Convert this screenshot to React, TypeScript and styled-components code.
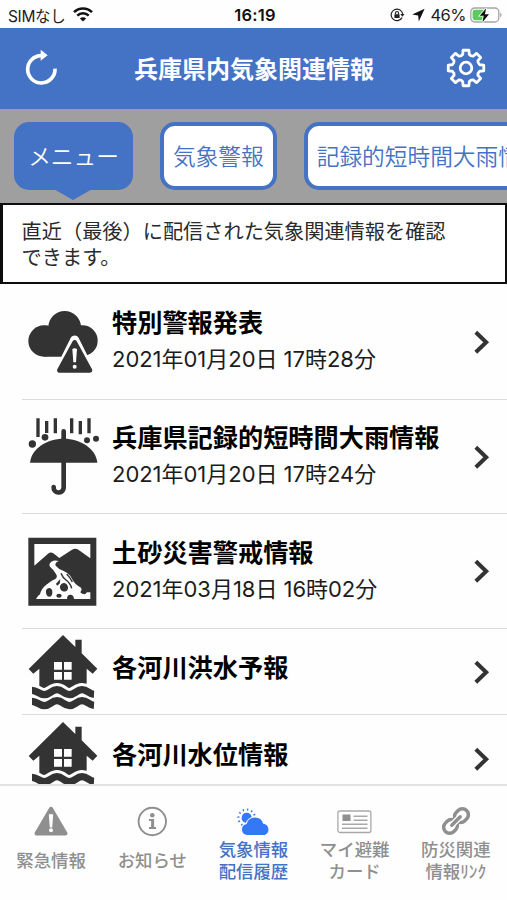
import React from "react";
import styled, { createGlobalStyle, css } from "styled-components";

const BLUE = "#4472c4";
const INK = "#333333";
const GRAY = "#8f8f8f";
const ACTIVE = "#3478f6";

const Global = createGlobalStyle`
  * { box-sizing: border-box; }
  html, body { margin: 0; padding: 0; background: #fefefe; overflow: hidden; }
  body { font-family: "Noto Sans CJK JP", "Noto Sans", sans-serif; color: #000; }
`;

const Screen = styled.div`
  width: 507px;
  height: 900px;
  display: flex;
  flex-direction: column;
  overflow: hidden;
  background: #fefefe;
`;

const StatusBar = styled.div`
  height: 28px;
  flex: none;
  display: grid;
  grid-template-columns: 1fr 60px 1fr;
  align-items: center;
  padding: 1px 5px 0 8px;
  font-family: "Inter", "Noto Sans CJK JP", sans-serif;
  font-size: 15.5px;
  color: #222;
`;

const StatusGroup = styled.div<{ $end?: boolean }>`
  display: flex;
  align-items: center;
  justify-content: ${(p) => (p.$end ? "flex-end" : "flex-start")};
  white-space: nowrap;
`;

const Carrier = styled.span`
  letter-spacing: -0.35px;
  margin-right: 8px;
`;

const Clock = styled.span`
  font-weight: 600;
  font-size: 16.5px;
  text-align: center;
  letter-spacing: 0.2px;
  color: #111;
`;

const Percent = styled.span`
  font-size: 16.5px;
  letter-spacing: -0.5px;
  margin: 0 4px 0 5px;
`;

const Header = styled.header`
  height: 81px;
  flex: none;
  display: flex;
  align-items: center;
  justify-content: space-between;
  padding: 0 21px 1px 22px;
  background: ${BLUE};
  color: #fff;
`;

const Title = styled.h1`
  margin: 0;
  padding-left: 2px;
  font-size: 24px;
  font-weight: 700;
  line-height: 36px;
`;

const MenuStrip = styled.div`
  height: 94px;
  flex: none;
  display: flex;
  align-items: flex-start;
  gap: 27px;
  padding: 13px 0 0 14px;
  background: #9f9f9f;
  overflow: hidden;
`;

const Pill = styled.button<{ $active?: boolean }>`
  position: relative;
  flex: none;
  height: 68px;
  padding: 0 9px 1px;
  border: 4px solid ${BLUE};
  border-radius: 15px;
  background: ${(p) => (p.$active ? BLUE : "#fff")};
  color: ${(p) => (p.$active ? "#fff" : BLUE)};
  font-family: inherit;
  font-size: 22.7px;
  font-weight: 350;
  white-space: nowrap;
  ${(p) =>
    p.$active &&
    css`
      width: 119px;
      &::after {
        content: "";
        position: absolute;
        left: 50%;
        top: 62px;
        margin-left: -22px;
        border: 21px solid transparent;
        border-top: 12px solid ${BLUE};
        border-bottom: 0;
      }
    `}
`;

const Notice = styled.p`
  flex: none;
  height: 81px;
  margin: 0;
  padding: 13px 18px 0 18.6px;
  border: solid #0d0d0d;
  border-width: 2px 2px 2px 3px;
  background: #fff;
  color: #2a2a2a;
  font-size: 20.2px;
  line-height: 26px;
`;

const List = styled.ul`
  flex: 1;
  min-height: 0;
  margin: 0;
  padding: 0;
  list-style: none;
  overflow: hidden;
`;

const Row = styled.li<{ $height: number }>`
  height: ${(p) => p.$height}px;
  margin-left: 22px;
  padding: 0 17px 0 3px;
  display: flex;
  align-items: center;
  border-bottom: 1px solid #dcdcdc;
`;

const RowText = styled.div<{ $single?: boolean }>`
  flex: 1;
  padding-left: 11px;
  margin-bottom: ${(p) => (p.$single ? 10 : 2)}px;
  white-space: nowrap;
`;

const RowTitle = styled.div`
  font-size: 25.2px;
  font-weight: 700;
  line-height: 37px;
`;

const RowDate = styled.div`
  font-family: "Inter", "Noto Sans CJK JP", sans-serif;
  font-size: 22px;
  font-weight: 400;
  line-height: 38px;
  letter-spacing: -0.03px;
  color: #1c1c1c;
`;

const TabBar = styled.nav`
  flex: none;
  height: 116px;
  display: grid;
  grid-template-columns: repeat(5, 101.2px);
  border-top: 2px solid #e2e2e2;
  background: #fefefe;
`;

const Tab = styled.div<{ $active?: boolean }>`
  display: flex;
  flex-direction: column;
  align-items: center;
  padding-top: 19px;
  color: ${(p) => (p.$active ? BLUE : GRAY)};
  font-size: 17.4px;
  font-weight: 500;
  line-height: 22px;
  text-align: center;
  white-space: nowrap;
`;

const TabLabel = styled.div`
  height: 45px;
  padding-left: 1px;
  display: flex;
  flex-direction: column;
  justify-content: center;
`;

const Wifi = () => (
  <svg width="20" height="15" viewBox="0 0 20 15" fill="none" stroke="#111" strokeWidth="2.5">
    <path d="M1 5.2a12.8 12.8 0 0 1 18 0" />
    <path d="M4.3 8.7a8 8 0 0 1 11.4 0" />
    <path d="M10 14.6l-3.1-3.1a4.4 4.4 0 0 1 6.2 0z" fill="#111" stroke="none" />
  </svg>
);

const RotationLock = () => (
  <svg width="15" height="14" viewBox="0 0 15 14" fill="none" stroke="#222" strokeWidth="1.2">
    <path d="M12.1 9.6a5.8 5.8 0 1 1 .6-3.6" />
    <path d="M10.3 6h4.2l-2.1 2.8z" fill="#222" stroke="none" />
    <rect x="4.4" y="6.2" width="5.2" height="3.9" rx=".6" fill="#222" stroke="none" />
    <path d="M5.5 6.4V5a1.5 1.5 0 0 1 3 0v1.4" />
  </svg>
);

const LocationArrow = () => (
  <svg width="20" height="14" viewBox="-7 0 20 14">
    <path d="M12.6 .8L.2 6.6l6 .9.6 5.9z" fill="#111" />
  </svg>
);

const Battery = () => (
  <svg width="32" height="16" viewBox="0 0 32 16">
    <rect x=".8" y="1" width="28" height="14" rx="4" fill="none" stroke="#a5a5a5" strokeWidth="1.3" />
    <path d="M30.2 5.6c1.8.8 1.8 4 0 4.8z" fill="#a5a5a5" />
    <path d="M5 2.8h9v10.4H5a2.4 2.4 0 0 1-2.4-2.4V5.2A2.4 2.4 0 0 1 5 2.8z" fill="#5ccb5f" />
    <path d="M16.2 1.2L9.7 8.8h4l-1.2 6.4L19 7.3h-4.1z" fill="#111" stroke="#fff" strokeWidth="1.6" paintOrder="stroke" />
  </svg>
);

const Reload = () => (
  <svg width="38" height="40" viewBox="0 0 114 120">
    <path d="M99 62A41 41 0 1 1 58 23" fill="none" stroke="#fff" strokeWidth="11" />
    <path d="M56 5l21 17-21 16z" fill="#fff" />
  </svg>
);

const gearPath = (() => {
  const pts: string[] = [];
  const at = (r: number, deg: number) => {
    const a = ((deg - 90) * Math.PI) / 180;
    return `${(20 + r * Math.cos(a)).toFixed(2)} ${(20 + r * Math.sin(a)).toFixed(2)}`;
  };
  for (let i = 0; i < 8; i++) {
    const c = i * 45;
    pts.push(`${i ? "L" : "M"}${at(14, c - 13.5)}`);
    pts.push(`L${at(18, c - 9.5)}`, `L${at(18, c + 9.5)}`, `L${at(14, c + 13.5)}`);
    pts.push(`Q${at(12.6, c + 22.5)} ${at(14, c + 31.5)}`);
  }
  return pts.join("") + "Z";
})();

const Gear = () => (
  <svg width="40" height="40" viewBox="0 0 40 40" fill="none" stroke="#fff" strokeWidth="2.8" strokeLinejoin="round">
    <path d={gearPath} />
    <circle cx="20" cy="20" r="5.8" />
  </svg>
);

const CloudAlert = () => (
  <svg width="76" height="80" viewBox="75 51 228 240">
    <g fill={INK}>
      <circle cx="194" cy="127" r="49" />
      <circle cx="132" cy="168" r="47" />
      <circle cx="247" cy="167" r="46" />
      <path d="M132 122h115v93H132z" />
      <path d="M224 165l-46 92h92z" stroke="#fefefe" strokeWidth="27" strokeLinejoin="round" />
    </g>
    <path d="M150 266h154v26H150z" fill="#fefefe" />
    <path d="M224 172l-46 84h92z" fill={INK} stroke={INK} strokeWidth="14" strokeLinejoin="round" />
    <path d="M217 192q7-4 14 0l-3 40h-8z" fill="#fefefe" />
    <circle cx="224" cy="245" r="6" fill="#fefefe" />
  </svg>
);

const Umbrella = () => (
  <svg width="76" height="80" viewBox="75 50 228 240" fill={INK}>
    <path d="M90 187c4-42 50-72 101-72s97 30 101 72z" />
    <path d="M191 93v170a15 15 0 0 1-30-3" fill="none" stroke={INK} strokeWidth="14" strokeLinecap="round" />
    <path d="M114 54v56M140 62v36M166 54v45M215 54v45M241 62v40M267 54v45" stroke={INK} strokeWidth="10" />
    <circle cx="97" cy="131" r="11" />
    <circle cx="135" cy="111" r="10" />
    <circle cx="261" cy="120" r="9" />
    <circle cx="288" cy="115" r="9" />
  </svg>
);

const Landslide = () => (
  <svg width="76" height="80" viewBox="75 48 228 240">
    <path d="M85 68h204v204H85z" fill={INK} />
    <g fill="#fefefe">
      <path d="M103 87h168v43l-36-26q-9-6-19 0l-38 25-18-14q-8-5-16 1l-41 36z" />
      <path d="M176 138q-13 6-9 14 8 10 24 16 18 8 24 22 8 18 28 28l2 6-4 8q4 6 14 6l6-6h10v20H108q3-8 12-14 4-18 19-29 12-11 27-17 8-6 2-15-8-14-18-22-5-8 4-15 10-6 22-2z" />
    </g>
    <g fill={INK}>
      <path d="M148 219q10 2 9 14t-9 12-10-12 10-14z" />
      <ellipse cx="192" cy="217" rx="12" ry="13" transform="rotate(-25 192 217)" />
      <ellipse cx="177" cy="242" rx="8" ry="6" />
      <path d="M201 252q0-13 10-13t11 13z" />
      <path d="M168 206l13-14-2 14-8 6z" />
    </g>
    <path d="M183 175q5 13 15 20 13 9 17 25M200 177q10 9 17 24" fill="none" stroke={INK} strokeWidth="4.5" />
  </svg>
);

const wave = (y: number) =>
  `M96 ${y}c16 0 20 13 37 13s21-15 38-15 20 15 37 15 21-15 38-15 20 13 36 14`;

const FloodHouse = () => (
  <svg width="76" height="80" viewBox="75 21 228 240">
    <path
      d="M189 30l37 36V44h19v41l47 46-14 15-18-15v65H118v-65l-18 15-14-14z"
      fill={INK}
    />
    <path d="M162 111h24v23h-24zM192 111h23v23h-23zM162 141h24v23h-24zM192 141h23v23h-23z" fill="#fefefe" />
    <g fill="none">
      <path d={wave(194)} stroke="#fefefe" strokeWidth="36" />
      <path d={wave(196)} stroke={INK} strokeWidth="22" />
      <path d={wave(229)} stroke={INK} strokeWidth="22" />
    </g>
  </svg>
);

const Chevron = () => (
  <svg width="20" height="28" viewBox="0 0 20 28" fill="none" stroke={INK} strokeWidth="4">
    <path d="M5.8 4.2l10.4 10L5.8 24.2" />
  </svg>
);

const AlertIcon = () => (
  <svg width="36" height="32" viewBox="0 0 36 32">
    <path d="M18 3.8L3.5 28.5h29z" fill={GRAY} stroke={GRAY} strokeWidth="4" strokeLinejoin="round" />
    <path d="M15.8 9.6q2.2-1.2 4.4 0l-1 13h-2.4z" fill="#fefefe" />
    <circle cx="18" cy="25.3" r="2" fill="#fefefe" />
  </svg>
);

const InfoIcon = () => (
  <svg width="36" height="32" viewBox="0 0 36 32" fill={GRAY}>
    <circle cx="18.3" cy="16.5" r="13.7" fill="none" stroke={GRAY} strokeWidth="1.9" />
    <circle cx="18.3" cy="10.3" r="2.3" />
    <path d="M15 14h5.1v8.1h2V24H15v-1.9h2.1v-6.2H15z" />
  </svg>
);

const WeatherIcon = () => (
  <svg width="40" height="32" viewBox="0 0 40 32" fill={ACTIVE}>
    <circle cx="13.7" cy="12.9" r="5.1" />
    <circle cx="13.7" cy="12.9" r="8.3" fill="none" stroke={ACTIVE} strokeWidth="2" strokeDasharray="1.4 2.946" />
    <path
      d="M14.2 30a5.6 5.6 0 0 1-.6-11.1 8.6 8.6 0 0 1 16.6-.2 5.9 5.9 0 0 1 1.6 11.3z"
      stroke="#fefefe"
      strokeWidth="2"
      paintOrder="stroke"
    />
  </svg>
);

const CardIcon = () => (
  <svg width="36" height="32" viewBox="0 0 36 32" fill="none" stroke="#a9a9a9" strokeWidth="1.3">
    <rect x="1.9" y="6" width="33" height="21.5" rx="2" />
    <path d="M6.5 9.5h8v6.5h-8z" fill={GRAY} stroke="none" />
    <path d="M17.5 11.3h14M17.5 15.3h14M6 19.3h25.5M6 23.3h25.5" strokeWidth="1.6" />
  </svg>
);

const LinkIcon = () => (
  <svg width="36" height="32" viewBox="0 0 36 32" fill="none" stroke={GRAY} strokeWidth="3.5">
    <g transform="rotate(-45 19 16)">
      <rect x="19.5" y="10" width="14.5" height="12" rx="6" />
      <rect x="4" y="10" width="14.5" height="12" rx="6" />
      <path d="M12.5 16h13" stroke="#fefefe" strokeWidth="6.2" />
      <path d="M13 16h12" strokeWidth="3.4" strokeLinecap="round" />
    </g>
  </svg>
);

const rows = [
  { title: "特別警報発表", date: "2021年01月20日 17時28分", icon: <CloudAlert />, height: 116 },
  { title: "兵庫県記録的短時間大雨情報", date: "2021年01月20日 17時24分", icon: <Umbrella />, height: 114 },
  { title: "土砂災害警戒情報", date: "2021年03月18日 16時02分", icon: <Landslide />, height: 115 },
  { title: "各河川洪水予報", icon: <FloodHouse />, height: 86 },
  { title: "各河川水位情報", icon: <FloodHouse />, height: 88 },
];

const tabs = [
  { lines: ["緊急情報"], icon: <AlertIcon /> },
  { lines: ["お知らせ"], icon: <InfoIcon /> },
  { lines: ["気象情報", "配信履歴"], icon: <WeatherIcon />, active: true },
  { lines: ["マイ避難", "カード"], icon: <CardIcon /> },
  { lines: ["防災関連", "情報ﾘﾝｸ"], icon: <LinkIcon /> },
];

export default function App() {
  return (
    <Screen>
      <Global />
      <StatusBar>
        <StatusGroup>
          <Carrier>SIMなし</Carrier>
          <Wifi />
        </StatusGroup>
        <Clock>16:19</Clock>
        <StatusGroup $end>
          <RotationLock />
          <LocationArrow />
          <Percent>46%</Percent>
          <Battery />
        </StatusGroup>
      </StatusBar>
      <Header>
        <Reload />
        <Title>兵庫県内気象関連情報</Title>
        <Gear />
      </Header>
      <MenuStrip>
        <Pill $active>メニュー</Pill>
        <Pill>気象警報</Pill>
        <Pill>記録的短時間大雨情報</Pill>
      </MenuStrip>
      <Notice>
        直近（最後）に配信された気象関連情報を確認
        <br />
        できます。
      </Notice>
      <List>
        {rows.map((r) => (
          <Row key={r.title} $height={r.height}>
            {r.icon}
            <RowText $single={!r.date}>
              <RowTitle>{r.title}</RowTitle>
              {r.date && <RowDate>{r.date}</RowDate>}
            </RowText>
            <Chevron />
          </Row>
        ))}
      </List>
      <TabBar>
        {tabs.map((t) => (
          <Tab key={t.lines[0]} $active={t.active}>
            {t.icon}
            <TabLabel>
              {t.lines.map((l) => (
                <span key={l}>{l}</span>
              ))}
            </TabLabel>
          </Tab>
        ))}
      </TabBar>
    </Screen>
  );
}
